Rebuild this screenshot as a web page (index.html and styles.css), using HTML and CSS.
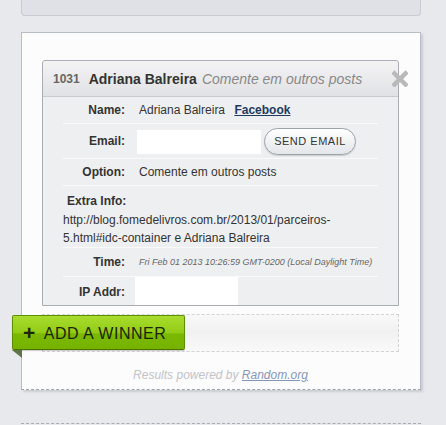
FILE: index.html
```html
<!DOCTYPE html>
<html lang="en">
<head>
  <meta charset="UTF-8">
  <title>Winner</title>
  <link rel="stylesheet" href="styles.css">
</head>
<body>

<div class="top-panel"></div>

<div class="card">
  <div class="entry">
    <div class="entry-head">
      <span class="entry-num">1031</span>
      <span class="entry-name">Adriana Balreira</span>
      <span class="entry-option">Comente em outros posts</span>
    </div>
    <div class="entry-body">
      <div class="row row-name">
        <span class="label">Name:</span>
        <span class="value">Adriana Balreira <a href="#" class="fb">Facebook</a></span>
      </div>
      <div class="row row-email">
        <span class="label">Email:</span>
        <span class="email-box"></span>
        <button class="send">SEND EMAIL</button>
      </div>
      <div class="row row-option">
        <span class="label">Option:</span>
        <span class="value">Comente em outros posts</span>
      </div>
      <div class="row row-extra">
        <div class="extra-label">Extra Info:</div>
        <div class="extra-text">http://blog.fomedelivros.com.br/2013/01/parceiros-5.html#idc-container e Adriana Balreira</div>
      </div>
      <div class="row row-time">
        <span class="label">Time:</span>
        <span class="time">Fri Feb 01 2013 10:26:59 GMT-0200 (Local Daylight Time)</span>
      </div>
      <div class="row row-ip">
        <span class="label">IP Addr:</span>
        <span class="ip-box"></span>
      </div>
    </div>
  </div>
  <svg class="close" width="16" height="17" viewBox="0 0 16 17">
    <path d="M2.5 3.5 L13.5 14.5 M13.5 3.5 L2.5 14.5" stroke="#b9b9b9" stroke-width="4.5" stroke-linecap="square"/>
  </svg>

  <div class="drop">
    <button class="add"><span class="plus">+</span>ADD A WINNER</button>
  </div>

  <p class="powered">Results powered by <a href="#">Random.org</a></p>
</div>

<div class="bottom-line"></div>

</body>
</html>
```

FILE: styles.css
```css
body {
  margin: 0;
  background: #e8e9ec;
  font-family: Arial, "Liberation Sans", sans-serif;
  color: #333;
}
.top-panel {
  margin: 0 25px 0 21px;
  height: 15px;
  background: #e0e1e6;
  border: 1px solid #c8cbd4;
  border-top: none;
  border-radius: 0 0 4px 4px;
}
.card {
  position: relative;
  margin: 16px 25px 0 21px;
  width: 357px;
  background: #fcfcfc;
  border: 1px solid #b8bcc7;
  border-bottom: 1px dashed #9ea2ad;
  box-shadow: 2px 2px 2px rgba(0, 0, 0, 0.12);
  padding: 27px 21px 0 20px;
}
.entry {
  border: 1px solid #a9acb3;
  border-radius: 3px 3px 0 0;
  background: #eeeff1;
}
.entry-head {
  height: 35px;
  display: flex;
  align-items: center;
  padding-left: 10px;
  background: linear-gradient(#f3f3f4, #e1e2e5);
  border-bottom: 1px solid #c9cacd;
  border-radius: 3px 3px 0 0;
  white-space: nowrap;
}
.entry-num {
  font-size: 12px;
  font-weight: bold;
  color: #666;
  margin-right: 9px;
}
.entry-name {
  font-size: 14px;
  font-weight: bold;
  color: #333;
  margin-right: 5px;
}
.entry-option {
  font-size: 14px;
  font-style: italic;
  color: #888;
}
.entry-body {
  height: 208px;
  overflow: hidden;
}
.row {
  margin: 0 20px;
  display: flex;
  align-items: center;
  border-bottom: 1px solid #fafafb;
  font-size: 12px;
}
.label {
  width: 62px;
  text-align: right;
  font-weight: bold;
  margin-right: 14px;
  flex: none;
}
.row-name { height: 26px; }
.row-email { height: 34px; }
.row-option { height: 26px; }
.row-extra {
  height: 62px;
  display: block;
  padding-top: 8px;
  box-sizing: border-box;
}
.row-time { height: 28px; }
.row-ip { height: 30px; align-items: flex-start; }
.row-ip .label { margin-top: 8px; margin-right: 10px; }
.fb {
  color: #1f3a5f;
  font-weight: bold;
  text-decoration: underline;
  margin-left: 6px;
}
.email-box {
  width: 124px;
  height: 24px;
  background: #fff;
  margin-left: -2px;
  margin-top: 2px;
}
.send {
  margin-left: 3px;
  width: 92px;
  height: 27px;
  border: 1px solid #9ca1ac;
  border-radius: 14px;
  background: linear-gradient(#ffffff, #e3e5e9);
  box-shadow: 0 1px 1px rgba(0, 0, 0, 0.15);
  font-family: Arial, "Liberation Sans", sans-serif;
  font-size: 11px;
  letter-spacing: 0.5px;
  color: #333;
  padding: 0;
}
.extra-label {
  font-weight: bold;
  padding-left: 4px;
  line-height: 14px;
}
.extra-text {
  line-height: 18px;
  margin-top: 3px;
  word-break: break-all;
  padding-right: 40px;
}
.time {
  font-size: 9px;
  font-style: italic;
  color: #666;
}
.ip-box {
  width: 103px;
  height: 30px;
  background: #fff;
}
.close {
  position: absolute;
  left: 370px;
  top: 37px;
}
.drop {
  position: relative;
  margin-top: 8px;
  height: 36px;
  border: 1px dashed #d3d3d6;
  background: linear-gradient(#f9f9f9, #f1f1f2 45%, #f9f9f9);
}
.add {
  position: absolute;
  left: -31px;
  top: 0;
  width: 173px;
  height: 35px;
  border: 1px solid #5d8f05;
  border-bottom-color: #4a7400;
  border-radius: 2px;
  background: linear-gradient(#a8dc2e, #93cc16 50%, #7bb800 55%, #76b300);
  color: #1a2608;
  font-family: Arial, "Liberation Sans", sans-serif;
  font-size: 16px;
  letter-spacing: 0.5px;
  text-align: left;
  padding: 0 0 0 10px;
  box-shadow: 0 1px 1px rgba(0, 0, 0, 0.2);
}
.add::after {
  content: "";
  position: absolute;
  left: -1px;
  top: 34px;
  border-top: 8px solid #5f7548;
  border-left: 10px solid transparent;
}
.plus {
  font-weight: bold;
  font-size: 21px;
  margin-right: 8px;
  vertical-align: -1px;
}
.powered {
  margin: 0;
  height: 37px;
  line-height: 46px;
  text-align: center;
  font-size: 12px;
  font-style: italic;
  color: #c2c3c9;
}
.powered a {
  color: #8597b8;
}
.bottom-line {
  margin: 33px 25px 0 21px;
  border-top: 1px dashed #a8abb4;
}
```
